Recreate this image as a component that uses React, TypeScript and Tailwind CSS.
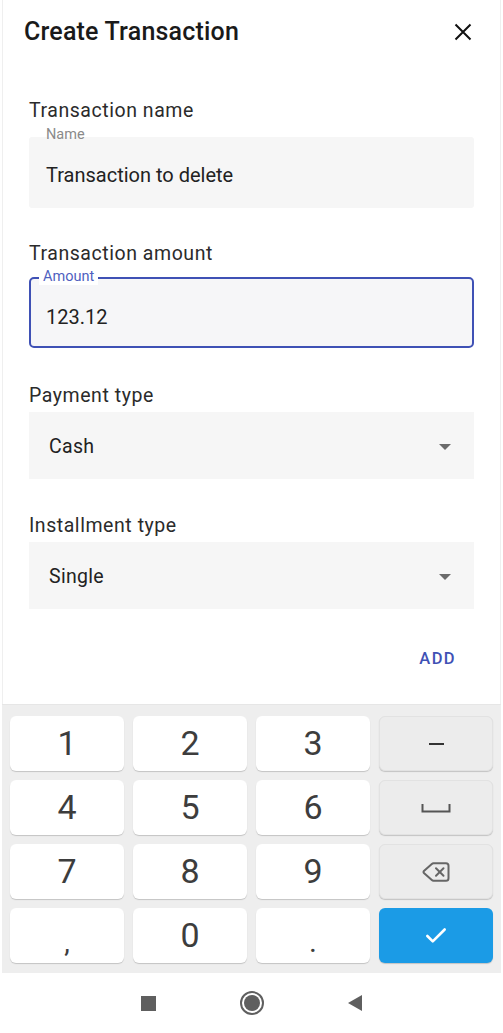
import { Check, Delete } from 'lucide-react'

const font = { fontFamily: 'Roboto, "Noto Sans", sans-serif' }

function SectionLabel({ children }: { children: string }) {
  return <div className="text-[19.5px] tracking-[0.55px] text-[#2b2b2b] leading-none">{children}</div>
}

function Caret() {
  return (
    <svg width="12" height="6" viewBox="0 0 12 6" className="mr-[23px]">
      <path d="M0 0h12L6 6z" fill="#6b6b6b" />
    </svg>
  )
}

function Key({ children, side = false }: { children: React.ReactNode; side?: boolean }) {
  return (
    <div
      className={`h-[55px] rounded-[6px] flex items-center justify-center text-[34px] text-[#3d3d3d] shadow-[0_1px_1px_rgba(0,0,0,0.18)] ${
        side ? 'bg-[#ececec] border border-[#e2e2e2]' : 'bg-white'
      }`}
    >
      {children}
    </div>
  )
}

export default function App() {
  return (
    <div className="w-[503px] h-[1033px] bg-white flex flex-col overflow-hidden" style={font}>
      <div className="flex-1 mx-[2px] border-x border-[#efefef] flex flex-col">
        {/* Header */}
        <div className="flex items-center justify-between pl-[21px] pr-[28px] h-[64px]">
          <h1 className="text-[25px] font-medium text-[#1a1a1a] tracking-[0.2px]">Create Transaction</h1>
          <svg width="18" height="18" viewBox="0 0 18 18">
            <path d="M1.5 1.5l15 15M16.5 1.5l-15 15" stroke="#111" strokeWidth="2" />
          </svg>
        </div>

        <div className="px-[26px] pt-[37px] flex flex-col">
          {/* Transaction name */}
          <SectionLabel>Transaction name</SectionLabel>
          <div className="relative mt-[16px] h-[71px] bg-[#f6f6f6] rounded-[3px] flex items-end pb-[23px] pl-[17px]">
            <span className="absolute left-[17px] top-[-9px] text-[14.5px] text-[#8a8a8a] leading-none">Name</span>
            <span className="text-[20px] text-[#222] leading-none">Transaction to delete</span>
          </div>

          {/* Transaction amount */}
          <div className="mt-[36px]">
            <SectionLabel>Transaction amount</SectionLabel>
          </div>
          <div className="relative mt-[14px] h-[71px] bg-[#f6f6f8] rounded-[5px] border-2 border-[#3f51b5] flex items-center pl-[15px] pt-[8px]">
            <span className="absolute left-[8px] top-[-10px] px-[4px] bg-white text-[14.5px] text-[#4f5fbf] leading-[16px]">
              Amount
            </span>
            <span className="text-[20px] text-[#222] leading-none">123.12</span>
          </div>

          {/* Payment type */}
          <div className="mt-[38px]">
            <SectionLabel>Payment type</SectionLabel>
          </div>
          <div className="mt-[6px] h-[67px] bg-[#f6f6f6] flex items-center justify-between pl-[20px] pt-[3px]">
            <span className="text-[19.5px] text-[#222] tracking-[0.3px]">Cash</span>
            <Caret />
          </div>

          {/* Installment type */}
          <div className="mt-[37px]">
            <SectionLabel>Installment type</SectionLabel>
          </div>
          <div className="mt-[7px] h-[67px] bg-[#f6f6f6] flex items-center justify-between pl-[20px] pt-[3px]">
            <span className="text-[19.5px] text-[#222] tracking-[0.3px]">Single</span>
            <Caret />
          </div>

          <div className="flex justify-end mt-[38px] pr-[18px]">
            <span className="text-[16.5px] font-medium text-[#3f51b5] tracking-[1.4px]">ADD</span>
          </div>
        </div>
      </div>

      {/* Numeric keyboard */}
      <div className="mx-[2px] bg-[#eeeeee] border-t border-[#e6e6e6] px-[8px] pt-[11px] pb-[10px] grid grid-cols-4 gap-x-[9px] gap-y-[9px]">
        <Key>1</Key>
        <Key>2</Key>
        <Key>3</Key>
        <Key side>
          <span className="block w-[15px] h-[2px] bg-[#333]" />
        </Key>
        <Key>4</Key>
        <Key>5</Key>
        <Key>6</Key>
        <Key side>
          <svg width="30" height="10" viewBox="0 0 30 10">
            <path d="M1.5 1v7.5h27V1" fill="none" stroke="#555" strokeWidth="2" />
          </svg>
        </Key>
        <Key>7</Key>
        <Key>8</Key>
        <Key>9</Key>
        <Key side>
          <Delete size={30} strokeWidth={1.6} color="#666" />
        </Key>
        <Key>
          <span className="text-[28px] mt-[14px]">,</span>
        </Key>
        <Key>0</Key>
        <Key>
          <span className="text-[30px] mt-[12px]">.</span>
        </Key>
        <div className="h-[55px] rounded-[6px] bg-[#1b9be6] flex items-center justify-center shadow-[0_1px_1px_rgba(0,0,0,0.18)]">
          <Check size={26} strokeWidth={2.4} color="white" />
        </div>
      </div>

      {/* Navigation bar */}
      <div className="h-[60px] bg-white flex items-center justify-center gap-[84px]">
        <span className="block w-[15px] h-[15px] bg-[#5f5f5f]" />
        <span className="w-[24px] h-[24px] rounded-full border-2 border-[#5f5f5f] flex items-center justify-center">
          <span className="block w-[16px] h-[16px] rounded-full bg-[#5f5f5f]" />
        </span>
        <svg width="14" height="16" viewBox="0 0 14 16">
          <path d="M14 0v16L0 8z" fill="#5f5f5f" />
        </svg>
      </div>
    </div>
  )
}
